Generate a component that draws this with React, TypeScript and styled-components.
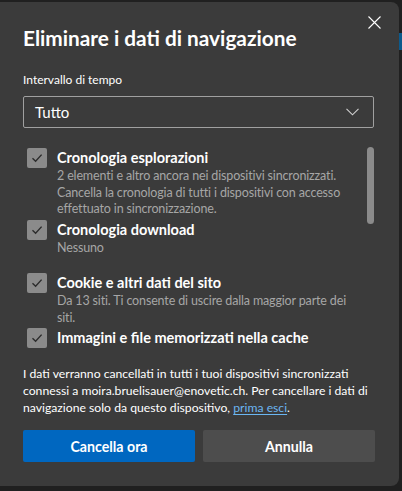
import React from "react";
import styled, { createGlobalStyle } from "styled-components";

const Global = createGlobalStyle`
  html, body {
    margin: 0;
    padding: 0;
    background: #202020;
    font-family: Lato, "Noto Sans", sans-serif;
    -webkit-font-smoothing: antialiased;
  }
`;

const Page = styled.div`
  width: 402px;
  height: 491px;
  padding-top: 2px;
  box-sizing: border-box;
  overflow: hidden;
`;

const Dialog = styled.div`
  position: relative;
  width: 399px;
  height: 484px;
  box-sizing: border-box;
  background: #3b3b3b;
  border-radius: 0 8px 8px 0;
  padding: 22px 24px 0 23px;
  display: flex;
  flex-direction: column;
  color: #ffffff;
`;

const Close = styled.button`
  position: absolute;
  top: 10px;
  right: 15px;
  width: 20px;
  height: 20px;
  padding: 0;
  border: none;
  background: transparent;
  display: flex;
  align-items: center;
  justify-content: center;
`;

const Title = styled.h1`
  margin: 0;
  font-size: 20.8px;
  line-height: 28px;
  font-weight: 700;
`;

const FieldLabel = styled.div`
  margin-top: 19px;
  font-size: 12px;
  line-height: 18px;
`;

const Select = styled.div`
  margin-top: 7px;
  margin-right: 1px;
  height: 32px;
  box-sizing: border-box;
  border: 1px solid #a0a0a0;
  border-radius: 2px;
  display: flex;
  align-items: center;
  justify-content: space-between;
  padding: 0 14px 0 11px;
  font-size: 15px;
`;

const ListArea = styled.div`
  position: relative;
  margin-top: 19px;
  padding-top: 1px;
  height: 205px;
  overflow: hidden;
  padding-right: 20px;
`;

const Thumb = styled.div`
  position: absolute;
  right: 1px;
  top: 0;
  width: 7px;
  height: 77px;
  border-radius: 4px;
  background: #8b8b8b;
`;

const Item = styled.div<{ $gap: number }>`
  display: grid;
  grid-template-columns: 20px 1fr;
  column-gap: 10px;
  padding-left: 4px;
  margin-bottom: ${(p) => p.$gap}px;
`;

const Box = styled.div`
  width: 20px;
  height: 20px;
  border-radius: 2px;
  background: #8b8b8b;
  display: flex;
  align-items: center;
  justify-content: center;
`;

const ItemTitle = styled.div`
  font-size: 14.5px;
  line-height: 20px;
  font-weight: 700;
`;

const ItemDesc = styled.div`
  font-size: 12.5px;
  line-height: 16.5px;
  letter-spacing: -0.15px;
  color: #a6a6a6;
`;

const Note = styled.p`
  margin: 12px 0 0;
  font-size: 12.2px;
  line-height: 17px;
`;

const Link = styled.a`
  color: #6bb6f2;
  text-decoration: underline;
  text-underline-offset: 2px;
`;

const Buttons = styled.div`
  margin-top: 14px;
  display: grid;
  grid-template-columns: 1fr 1fr;
  column-gap: 8px;
`;

const Button = styled.button<{ $primary?: boolean }>`
  height: 32px;
  border: none;
  border-radius: 2px;
  font-family: inherit;
  font-size: 14.2px;
  font-weight: 700;
  color: #ffffff;
  background: ${(p) => (p.$primary ? "#0067c0" : "#4d4d4d")};
`;

const Edge = styled.div`
  position: absolute;
  right: -3px;
  top: 31px;
  width: 3px;
  height: 17px;
  background: #0c5a8c;
`;

const Check = () => (
  <svg width="14" height="14" viewBox="0 0 14 14">
    <path d="M2.5 7.3 L5.6 10.2 L11.6 3.6" fill="none" stroke="#2b2b2b" strokeWidth="1.4" />
  </svg>
);

const items = [
  {
    title: "Cronologia esplorazioni",
    desc: "2 elementi e altro ancora nei dispositivi sincronizzati. Cancella la cronologia di tutti i dispositivi con accesso effettuato in sincronizzazione.",
    gap: 2,
  },
  { title: "Cronologia download", desc: "Nessuno", gap: 17 },
  { title: "Cookie e altri dati del sito", desc: "Da 13 siti. Ti consente di uscire dalla maggior parte dei siti.", gap: 2 },
  { title: "Immagini e file memorizzati nella cache", desc: "", gap: 0 },
];

export default function App() {
  return (
    <>
      <Global />
      <Page>
        <Dialog>
          <Edge />
          <Close aria-label="Chiudi">
            <svg width="13" height="13" viewBox="0 0 13 13">
              <path d="M0.5 0.5 L12.5 12.5 M12.5 0.5 L0.5 12.5" stroke="#ffffff" strokeWidth="1.1" />
            </svg>
          </Close>
          <Title>Eliminare i dati di navigazione</Title>
          <FieldLabel>Intervallo di tempo</FieldLabel>
          <Select>
            <span>Tutto</span>
            <svg width="13" height="8" viewBox="0 0 13 8">
              <path d="M0.5 0.8 L6.5 6.8 L12.5 0.8" fill="none" stroke="#d0d0d0" strokeWidth="1.1" />
            </svg>
          </Select>
          <ListArea>
            <Thumb />
            {items.map((it) => (
              <Item key={it.title} $gap={it.gap}>
                <Box>
                  <Check />
                </Box>
                <div>
                  <ItemTitle>{it.title}</ItemTitle>
                  {it.desc && <ItemDesc>{it.desc}</ItemDesc>}
                </div>
              </Item>
            ))}
          </ListArea>
          <Note>
            I dati verranno cancellati in tutti i tuoi dispositivi sincronizzati connessi a
            moira.bruelisauer@enovetic.ch. Per cancellare i dati di navigazione solo da questo
            dispositivo, <Link>prima esci</Link>.
          </Note>
          <Buttons>
            <Button $primary>Cancella ora</Button>
            <Button>Annulla</Button>
          </Buttons>
        </Dialog>
      </Page>
    </>
  );
}
